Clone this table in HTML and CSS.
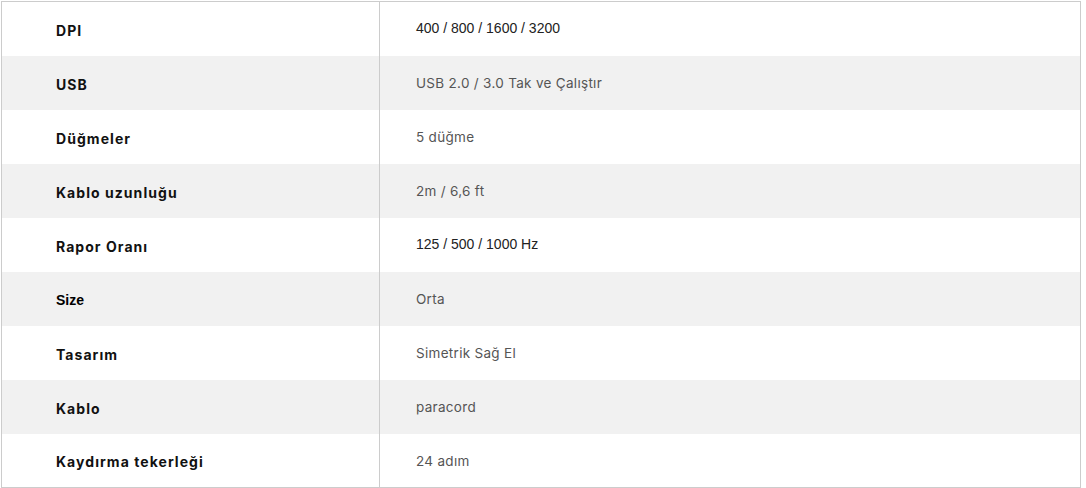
FILE: index.html
```html
<!DOCTYPE html>
<html lang="tr">
<head>
<meta charset="utf-8">
<title>Özellikler</title>
<link rel="stylesheet" href="styles.css">
</head>
<body>
<div class="specs">
  <div class="row"><div class="label">DPI</div><div class="value arial">400 / 800 / 1600 / 3200</div></div>
  <div class="row alt"><div class="label">USB</div><div class="value">USB 2.0 / 3.0 Tak ve Çalıştır</div></div>
  <div class="row"><div class="label">Düğmeler</div><div class="value">5 düğme</div></div>
  <div class="row alt"><div class="label">Kablo uzunluğu</div><div class="value">2m / 6,6 ft</div></div>
  <div class="row"><div class="label">Rapor Oranı</div><div class="value arial">125 / 500 / 1000 Hz</div></div>
  <div class="row alt"><div class="label arial">Size</div><div class="value">Orta</div></div>
  <div class="row"><div class="label">Tasarım</div><div class="value">Simetrik Sağ El</div></div>
  <div class="row alt"><div class="label">Kablo</div><div class="value">paracord</div></div>
  <div class="row last"><div class="label">Kaydırma tekerleği</div><div class="value">24 adım</div></div>
</div>
</body>
</html>
```
FILE: styles.css
```css
html, body {
  margin: 0;
  padding: 0;
  background: #fff;
}

.specs {
  margin: 1px 0 0 1px;
  width: 1078px;
  border: 1px solid #cccccc;
  font-family: Inter, "Open Sans", sans-serif;
}

.row {
  display: grid;
  grid-template-columns: 377px 1px 1fr;
  height: 54px;
}

.row.last {
  height: 53px;
}

.row.alt {
  background: #f1f1f1;
}

.label {
  grid-column: 1;
  display: flex;
  align-items: center;
  padding-left: 54px;
  padding-top: 2px;
  font-weight: 700;
  font-size: 14px;
  letter-spacing: 1.05px;
  color: #111;
}

.value {
  grid-column: 3;
  display: flex;
  align-items: center;
  padding-left: 36px;
  font-size: 13.5px;
  letter-spacing: 0.3px;
  color: #555;
}

.row::before {
  content: "";
  grid-column: 2;
  grid-row: 1;
  background: #cccccc;
}

.value.arial {
  font-family: "Liberation Sans", Arial, sans-serif;
  font-size: 14px;
  letter-spacing: 0;
  color: #222;
  padding-bottom: 3px;
}

.label.arial {
  font-family: "Liberation Sans", Arial, sans-serif;
  font-size: 14px;
  letter-spacing: 0;
  color: #000;
}
```
